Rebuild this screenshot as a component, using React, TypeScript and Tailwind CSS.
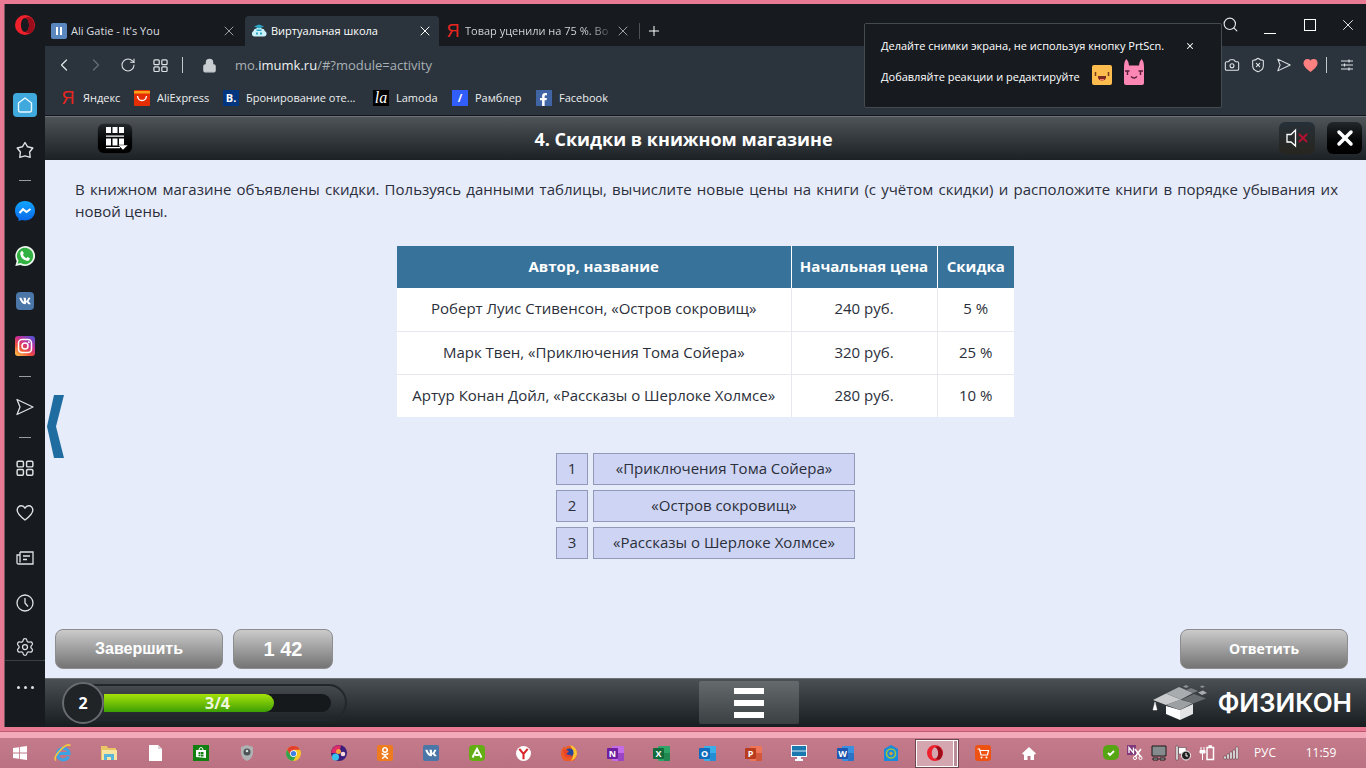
import { type FC, type ReactNode } from "react";
import {
  Camera,
  ChevronLeft,
  ChevronRight,
  Lock,
  Plus,
  RotateCw,
  Search,
  Settings,
  ShieldX,
  X,
} from "lucide-react";
import { FaFacebookF, FaOdnoklassniki, FaVk } from "react-icons/fa";

type IconProps = { className?: string };

const Dial: FC<IconProps> = ({ className }) => (
  <svg viewBox="0 0 16 16" className={className} fill="none" stroke="currentColor" strokeWidth="1.3">
    <rect x="1" y="2" width="5.6" height="5" rx="1" />
    <rect x="9.4" y="2" width="5.6" height="5" rx="1" />
    <rect x="1" y="9.4" width="5.6" height="5" rx="1" />
    <rect x="9.4" y="9.4" width="5.6" height="5" rx="1" />
  </svg>
);

const Plane: FC<IconProps> = ({ className }) => (
  <svg viewBox="0 0 18 18" className={className} fill="none" stroke="currentColor" strokeWidth="1.3" strokeLinejoin="round">
    <path d="M1 1.5 17 9 1 16.5 4 9Z" />
  </svg>
);

const Heart: FC<IconProps & { fill?: string }> = ({ className, fill = "none" }) => (
  <svg viewBox="0 0 18 18" className={className} fill={fill} stroke="currentColor" strokeWidth="1.4" strokeLinejoin="round">
    <path d="M9 16C5 13 1.2 10 1.2 6.3 1.2 3.6 3.1 1.8 5.3 1.8 7 1.8 8.3 2.7 9 4.2 9.7 2.7 11 1.8 12.7 1.8 14.9 1.8 16.8 3.6 16.8 6.3 16.8 10 13 13 9 16Z" />
  </svg>
);

const OperaLogo: FC<IconProps> = ({ className }) => (
  <svg viewBox="0 0 20 20" className={className}>
    <path fillRule="evenodd" fill="#f0202d" d="M10 0a10 10 0 1 0 0 20 10 10 0 0 0 0-20Zm0 3c2.4 0 4 3.1 4 7s-1.6 7-4 7-4-3.1-4-7 1.6-7 4-7Z" />
    <path fill="#9c0d1c" d="M10 3c3-2 5-1 6.7.6A10 10 0 0 1 16.7 17.4C15 18.8 12.5 18.6 10 17c2.4 0 4-3.1 4-7s-1.6-7-4-7Z" />
  </svg>
);

const Home = () => (
  <span className="flex size-6 items-center justify-center rounded-sm bg-[#3fa9dd]">
    <svg viewBox="0 0 16 16" className="size-4" fill="none" stroke="#e8f8ff" strokeWidth="1.4" strokeLinejoin="round">
      <path d="M8 1 14.5 6V13Q14.5 15 12.5 15H3.5Q1.5 15 1.5 13V6Z" />
    </svg>
  </span>
);

const Star = () => (
  <svg viewBox="0 0 18 18" className="size-[18px]" fill="none" stroke="currentColor" strokeWidth="1.4" strokeLinejoin="round">
    <path d="M9 1.5 11.6 5.8 16.8 7 13.6 11 14.2 16.3 9 14.8 3.8 16.3 4.4 11 1.2 7 6.4 5.8Z" />
  </svg>
);

const Messenger = () => (
  <svg viewBox="0 0 20 20" className="size-5">
    <defs>
      <linearGradient id="msg" x1="0" y1="0" x2="0" y2="1">
        <stop offset="0" stopColor="#12a5ff" />
        <stop offset="1" stopColor="#0968e8" />
      </linearGradient>
    </defs>
    <path fill="url(#msg)" d="M10 0C15.800 0 20 4 20 9.700S15.800 19.400 10 19.400Q8.300 19.400 7 19L3.500 20V17.200Q0 14.300 0 9.700C0 4 4.200 0 10 0Z" />
    <path d="M4.500 12 8 8.200 11.500 11 15.500 8" fill="none" stroke="#fff" strokeWidth="2" />
  </svg>
);

const WhatsApp = () => (
  <svg viewBox="0 0 20 20" className="size-5">
    <path fill="#eef7ee" d="M10 0a10 10 0 1 1-4.500 18.900L.3 20 1.700 15A10 10 0 0 1 10 0Z" />
    <path fill="#32b142" d="M10 1.800a8.200 8.200 0 1 1-4.300 15.200L2.600 17.700 3.500 14.800A8.200 8.200 0 0 1 10 1.800Z" />
    <path fill="#fff" d="M6.300 5.300 7.800 5.200 8.800 7.600 7.900 8.800Q9.200 11.300 11.400 12.200L12.500 11.100 14.900 12.300Q14.800 14.800 12.400 14.900 6.200 13.900 5.200 7.700 5.200 6.100 6.300 5.300Z" />
  </svg>
);

const VkTile: FC<{ rounded?: boolean }> = ({ rounded }) => (
  <span className={`flex items-center justify-center bg-[#4a76a8] text-white ${rounded ? "size-[18px] rounded" : "size-4 rounded-xs"}`}>
    <FaVk className="size-3" />
  </span>
);

const Instagram = () => (
  <svg viewBox="0 0 20 20" className="size-5">
    <defs>
      <linearGradient id="insta" x1="0.1" y1="1" x2="0.8" y2="0">
        <stop offset="0" stopColor="#fdc04c" />
        <stop offset="0.35" stopColor="#f0503a" />
        <stop offset="0.65" stopColor="#c72e92" />
        <stop offset="1" stopColor="#5c4fd0" />
      </linearGradient>
    </defs>
    <rect width="20" height="20" rx="3" fill="url(#insta)" />
    <rect x="3.500" y="3.500" width="13" height="13" rx="3.500" fill="none" stroke="#fff" strokeWidth="1.500" />
    <circle cx="10" cy="10" r="3" fill="none" stroke="#fff" strokeWidth="1.500" />
    <circle cx="13.800" cy="6.300" r="1" fill="#fff" />
  </svg>
);

const News = () => (
  <svg viewBox="0 0 18 18" className="size-[18px]" fill="none" stroke="currentColor" strokeWidth="1.3">
    <path d="M4 3h13v12H2.500Q1 15 1 13.500V6h3" />
    <path d="M4 3V13.500M7 7h7M7 10.500h4" />
  </svg>
);

const Clock = () => (
  <svg viewBox="0 0 18 18" className="size-[18px]" fill="none" stroke="currentColor" strokeWidth="1.3">
    <circle cx="9" cy="9" r="8" />
    <path d="M9 4v5l3 3.500" />
  </svg>
);

const Dash = () => (
  <div className="flex h-4 w-full items-center justify-center">
    <span className="h-px w-3 bg-[#9a9da0]" />
  </div>
);

const SideButton: FC<{ label: string; children: ReactNode }> = ({ label, children }) => (
  <button aria-label={label} className="flex h-[45px] w-full shrink-0 items-center justify-center text-[#dfe1e3]">
    {children}
  </button>
);

const Sidebar = () => (
  <nav className="flex w-10 shrink-0 flex-col items-center bg-[#171b1f]">
    <button aria-label="Opera" className="mb-9 flex h-[42px] items-center">
      <OperaLogo className="size-5" />
    </button>
    <SideButton label="Экспресс-панель"><Home /></SideButton>
    <SideButton label="Закладки"><Star /></SideButton>
    <Dash />
    <SideButton label="Messenger"><Messenger /></SideButton>
    <SideButton label="WhatsApp"><WhatsApp /></SideButton>
    <SideButton label="VK"><VkTile rounded /></SideButton>
    <SideButton label="Instagram"><Instagram /></SideButton>
    <Dash />
    <SideButton label="Flow"><Plane className="size-[18px]" /></SideButton>
    <Dash />
    <SideButton label="Вкладки"><Dial className="size-[18px]" /></SideButton>
    <SideButton label="Избранное"><Heart className="size-[18px]" /></SideButton>
    <SideButton label="Новости"><News /></SideButton>
    <SideButton label="История"><Clock /></SideButton>
    <button aria-label="Настройки" className="flex h-9 w-full items-end justify-center border-b border-[#3b4045] pb-[3px] text-[#dfe1e3]">
      <Settings className="size-5" strokeWidth={1.5} />
    </button>
    <button aria-label="Ещё" className="flex h-[52px] items-center gap-1">
      <span className="size-[3px] rounded-full bg-[#dfe1e3]" />
      <span className="size-[3px] rounded-full bg-[#dfe1e3]" />
      <span className="size-[3px] rounded-full bg-[#dfe1e3]" />
    </button>
  </nav>
);

const School = () => (
  <svg viewBox="0 0 16 16" className="size-4 shrink-0">
    <path fill="#c9f2fb" d="M3 13.500a3 3 0 0 1-.5-5.500Q3 5.500 5 5.700 8 3 11 5.700 13.500 5.500 13.700 8 16 9 15.500 11.500 15 13.500 13 13.500Z" />
    <path fill="#2aa5c5" d="M3 3.500 8 1.500l5 2L8 5.500ZM5.500 6.500h5V8h-5ZM5 9.500h2v2H5ZM9 9.500h2v2H9Z" />
  </svg>
);

const Tab: FC<{ icon: ReactNode; title: string; active?: boolean; faded?: boolean }> = ({ icon, title, active, faded }) => (
  <div className={`flex h-[30px] items-center gap-1 pl-1.5 ${active ? "w-[194px] rounded-t-sm bg-[#2b343c] pr-1.5 text-white" : "w-[200px] pr-2 text-[#dcdee0]"}`}>
    {icon}
    <span className={`min-w-0 flex-1 whitespace-nowrap ${faded ? "bg-linear-to-r from-[#dcdee0] from-85% to-[#3a3f44] bg-clip-text text-transparent" : ""}`}>
      {title}
    </span>
    <button aria-label="Закрыть вкладку" className={active ? "text-white" : "text-[#9b9fa3]"}>
      <X className="size-4" strokeWidth={1.5} />
    </button>
  </div>
);

const Ya = () => <span className="w-4 shrink-0 text-center font-['Liberation_Sans'] text-lg leading-5 text-[#e8261f]">Я</span>;

const TabBar = () => (
  <div className="flex h-[42px] items-center bg-[#171b1f]">
    <div className="flex h-full items-end">
      <Tab
        title="Ali Gatie - It's You"
        icon={
          <span className="flex size-4 items-center justify-center gap-0.5 rounded-xs bg-[#5a87bd]">
            <span className="h-2 w-0.5 bg-white" />
            <span className="h-2 w-0.5 bg-white" />
          </span>
        }
      />
      <Tab active title="Виртуальная школа" icon={<School />} />
      <Tab faded title="Товар уценили на 75 %. Во" icon={<Ya />} />
      <div className="flex h-[30px] items-center gap-1.5 text-white">
        <span className="h-4 w-px bg-[#4b5157]" />
        <button aria-label="Новая вкладка"><Plus className="size-4" strokeWidth={1.5} /></button>
      </div>
    </div>
    <div className="ml-auto flex text-[#e6e8ea]">
      <button aria-label="Поиск" className="relative z-20 flex w-10 justify-center"><Search className="size-[17px]" strokeWidth={1.6} /></button>
      <button aria-label="Свернуть" className="flex w-10 items-end justify-center"><span className="h-px w-3 bg-white" /></button>
      <button aria-label="Развернуть" className="flex w-10 items-center justify-center"><span className="size-3 border border-white" /></button>
      <button aria-label="Закрыть" className="flex w-9 justify-center"><X className="size-[18px]" strokeWidth={1.3} /></button>
    </div>
  </div>
);

const AddressBar = () => (
  <div className="flex h-[38px] items-center pr-1.5 pl-[3px] text-[#dfe3e6]">
    <button aria-label="Назад" className="flex w-8 justify-center"><ChevronLeft className="size-5" strokeWidth={1.5} /></button>
    <button aria-label="Вперёд" className="flex w-8 justify-center text-[#646d75]"><ChevronRight className="size-5" strokeWidth={1.5} /></button>
    <button aria-label="Обновить" className="flex w-8 justify-center"><RotateCw className="size-4" strokeWidth={1.6} /></button>
    <button aria-label="Экспресс-панель" className="flex w-8 justify-center"><Dial className="size-[15px]" /></button>
    <span className="ml-1.5 mr-2.5 h-4 w-px bg-[#c3c8cc]" />
    <span className="flex w-8 justify-center"><Lock className="size-[15px] text-[#c9ced2]" fill="#c9ced2" /></span>
    <button className="ml-2.5 flex-1 text-left text-[13px] text-[#a9b0b6]">
      mo.<span className="text-[#eef0f2]">imumk.ru</span>/#?module=activity
    </button>
    <button aria-label="Снимок" className="flex w-[26px] justify-center"><Camera className="size-4" strokeWidth={1.6} /></button>
    <button aria-label="Защита" className="flex w-[26px] justify-center"><ShieldX className="size-4" strokeWidth={1.6} /></button>
    <button aria-label="Отправить" className="flex w-[26px] justify-center"><Plane className="size-[14px]" /></button>
    <button aria-label="В избранное" className="flex w-[26px] justify-center text-[#ff8080]"><Heart className="size-[15px]" fill="#ff8080" /></button>
    <span className="mx-[3px] h-4 w-px bg-[#c3c8cc]" />
    <button aria-label="Простые настройки" className="ml-1 flex w-[26px] justify-center">
      <svg viewBox="0 0 14 14" className="size-[14px]" stroke="currentColor" strokeWidth="1.2">
        <path d="M1 3h12M1 7h12M1 11h12M9 1.500v3M4.500 5.500v3M9 9.500v3" />
      </svg>
    </button>
  </div>
);

const bookmarks: { title: string; width: string; icon: ReactNode }[] = [
  { title: "Яндекс", width: "w-[74px]", icon: <Ya /> },
  {
    title: "AliExpress",
    width: "w-[89px]",
    icon: (
      <svg viewBox="0 0 16 16" className="size-4 shrink-0">
        <rect width="16" height="16" rx="1" fill="#e62e04" />
        <path d="M0 1h16v2.500H0Z" fill="#f9a11b" />
        <path d="M3.500 6Q4 10.500 8 10.500T12.500 6" fill="none" stroke="#fff" strokeWidth="1.4" />
      </svg>
    ),
  },
  {
    title: "Бронирование оте...",
    width: "w-[150px]",
    icon: <span className="flex size-4 shrink-0 items-center justify-center bg-[#003580] font-bold text-white">B.</span>,
  },
  {
    title: "Lamoda",
    width: "w-[79px]",
    icon: <span className="flex size-4 shrink-0 items-center justify-center bg-black font-['Liberation_Serif'] text-base leading-4 text-white italic">la</span>,
  },
  {
    title: "Рамблер",
    width: "w-[84px]",
    icon: <span className="flex size-4 shrink-0 items-center justify-center bg-[#315efb] font-bold text-white">/</span>,
  },
  {
    title: "Facebook",
    width: "w-[90px]",
    icon: (
      <span className="flex size-4 shrink-0 items-end justify-end bg-[#4065a5] pr-0.5 text-white">
        <FaFacebookF className="size-[13px]" />
      </span>
    ),
  },
];

const Bookmarks = () => (
  <div className="flex h-[31px] items-center pb-1 pl-[15px] text-[#eceef0]">
    {bookmarks.map((b) => (
      <a key={b.title} href="#" className={`flex items-center gap-[7px] whitespace-nowrap ${b.width}`}>
        {b.icon}
        {b.title}
      </a>
    ))}
  </div>
);

const SnapshotTip = () => (
  <div className="absolute top-[19px] right-36 z-10 h-[85px] w-[358px] rounded-xs border border-[#434a50] bg-[#171b1f] px-4 pt-3 text-white">
    <div className="flex h-5 items-center justify-between pr-2.5">
      <span className="whitespace-nowrap">Делайте снимки экрана, не используя кнопку PrtScn.</span>
      <button aria-label="Закрыть подсказку"><X className="size-[10px]" strokeWidth={2.5} /></button>
    </div>
    <div className="mt-[3px] flex items-end gap-3">
      <span className="whitespace-nowrap">Добавляйте реакции и редактируйте</span>
      <svg viewBox="0 0 20 20" className="size-5">
        <rect width="20" height="20" rx="2" fill="#fcbc4e" />
        <path d="M3.500 7v4M16.500 7v4" stroke="#7a3c18" strokeWidth="1.500" />
        <path d="M6 11h8v1.500Q13.500 15.500 10 15.500T6 12.500Z" fill="#7a2c20" />
        <path d="M8 14h4v1.300H8Z" fill="#ff7b6b" />
      </svg>
      <svg viewBox="0 0 20 26" className="h-[26px] w-5">
        <path d="M0 8Q0 2 2.500 0 4.500 2 5 6.500h10Q15.500 2 17.500 0 20 2 20 8V24a2 2 0 0 1-2 2H2a2 2 0 0 1-2-2Z" fill="#fd87b4" />
        <path d="M1 12h4.500M3.500 12v4M19 12h-4.500M16.500 12v4M7 17.500Q10 20.500 13 17.500" fill="none" stroke="#5b1f3c" strokeWidth="1.400" />
      </svg>
    </div>
  </div>
);

const LessonHeader = () => (
  <header className="grid h-[45px] shrink-0 grid-cols-3 items-center border-t border-[#12161a] bg-linear-to-b from-[#50555a] to-[#1c2125] shadow-[inset_0_1px_0_#6d7378]">
    <button aria-label="Содержание" className="ml-[53px] flex h-[29px] w-[34px] items-center justify-center rounded-md bg-linear-to-b from-[#24282b] to-black shadow-[0_0_1px_#000]">
      <svg viewBox="0 0 26 24" className="h-6 w-[26px]" fill="#fff">
        <path d="M4 1h5v6H4ZM10.500 1h5v6h-5ZM17 1h5v6h-5ZM4 9.500h18v1.300H4ZM4 12.500h5v7H4ZM10.500 12.500h5v7h-5ZM17 12.500h5v7h-5ZM4 21h14v1.300H4Z" />
        <path d="M16 19h10l-5 5Z" stroke="#111" strokeWidth="0.500" />
      </svg>
    </button>
    <h1 className="pt-0.5 pr-11 text-center text-lg leading-6 font-bold whitespace-nowrap text-white">4. Скидки в книжном магазине</h1>
    <div className="flex justify-end gap-3 pr-1">
      <button aria-label="Звук" className="flex h-8 w-9 items-center justify-center rounded-md bg-linear-to-b from-[#263038] to-[#27251f]">
        <svg viewBox="0 0 24 20" className="h-5 w-6" fill="none">
          <path d="M2 6.500h4L10.500 2v16L6 14H2Z" stroke="#fff" strokeWidth="1.300" />
          <path d="M14 6l8 8M22 6l-8 8" stroke="#b0122f" strokeWidth="2" />
        </svg>
      </button>
      <button aria-label="Выход" className="flex h-8 w-[35px] items-center justify-center rounded-md bg-linear-to-b from-[#24282b] to-black text-white">
        <X className="size-6" strokeWidth={3.5} />
      </button>
    </div>
  </header>
);

const books = [
  { name: "Роберт Луис Стивенсон, «Остров сокровищ»", price: "240 руб.", discount: "5 %" },
  { name: "Марк Твен, «Приключения Тома Сойера»", price: "320 руб.", discount: "25 %" },
  { name: "Артур Конан Дойл, «Рассказы о Шерлоке Холмсе»", price: "280 руб.", discount: "10 %" },
];

const answers = ["«Приключения Тома Сойера»", "«Остров сокровищ»", "«Рассказы о Шерлоке Холмсе»"];

const actionClass = "h-10 rounded-lg border border-[#8d8d90] bg-linear-to-b from-[#cbcbcb] to-[#747474] font-bold text-white";

const Lesson = () => (
  <main className="relative flex flex-1 flex-col bg-[#e7ecfa] text-[15px] text-[#2b2f3a]">
    <button aria-label="Предыдущее задание" className="absolute top-1/2 left-0.5 -translate-y-6">
      <svg viewBox="0 0 17 63" className="h-[63px] w-[17px]">
        <path d="M7 0h10L9 31.500 17 63H7L0 31.500Z" fill="#1f6ca0" />
      </svg>
    </button>
    <p className="pt-[18px] pr-7 pl-[30px] text-justify leading-[22px]">
      В книжном магазине объявлены скидки. Пользуясь данными таблицы, вычислите новые цены на книги (с учётом скидки) и расположите книги в порядке убывания их новой цены.
    </p>
    <table className="mx-auto mt-6 w-[617px] table-fixed text-center leading-5">
      <thead>
        <tr className="h-[42px] bg-[#37729a] text-white">
          <th className="w-[394px] pb-0.5">Автор, название</th>
          <th className="w-[146px] border-l border-white pb-0.5">Начальная цена</th>
          <th className="border-l border-white pb-0.5">Скидка</th>
        </tr>
      </thead>
      <tbody className="bg-white">
        {books.map((book) => (
          <tr key={book.name} className="h-[43px] border-b border-[#e6e8ee] last:border-b-0">
            <td className="pb-0.5 whitespace-nowrap">{book.name}</td>
            <td className="border-l border-[#e6e8ee] pb-0.5">{book.price}</td>
            <td className="border-l border-[#e6e8ee] pb-0.5">{book.discount}</td>
          </tr>
        ))}
      </tbody>
    </table>
    <ol className="mx-auto mt-9 flex flex-col gap-[5px] text-center leading-5">
      {answers.map((answer, i) => (
        <li key={answer} className="flex h-8 gap-[5px]">
          <span className="flex w-8 items-center justify-center border border-[#9299b8] bg-[#ced4f3] pb-0.5">{i + 1}</span>
          <button className="w-[262px] border border-[#9299b8] bg-[#ced4f3] pb-0.5 whitespace-nowrap">{answer}</button>
        </li>
      ))}
    </ol>
    <div className="mt-auto flex gap-2.5 px-2.5 pt-4 pb-[9px]">
      <button className={`w-[168px] font-['Liberation_Sans'] text-base ${actionClass}`}>Завершить</button>
      <button className={`w-[100px] font-['Liberation_Sans'] text-xl ${actionClass}`}>1 42</button>
      <button className={`mr-2 ml-auto w-[168px] text-sm ${actionClass}`}>Ответить</button>
    </div>
  </main>
);

const LessonFooter = () => (
  <footer className="flex h-[49px] shrink-0 items-center justify-between bg-linear-to-b from-[#4b5155] to-[#181d20] pr-3.5 pl-[17px] shadow-[inset_0_1px_0_#6b7175]">
    <div className="flex h-[37px] w-[285px] items-center rounded-full border-2 border-[#22272b] bg-linear-to-b from-[#454a4e] to-[#202528] pr-3.5">
      <span className="-ml-0.5 flex size-[42px] shrink-0 items-center justify-center rounded-full border-2 border-[#686c70] bg-[#202427] text-base font-bold text-white">2</span>
      <div className="relative h-[18px] flex-1 overflow-hidden rounded-r-full bg-[#16191c]">
        <div className="h-full rounded-r-full bg-linear-to-b from-[#a4e30a] to-[#3a9f04]" style={{ width: `${(3 / 4) * 100}%` }} />
        <span className="absolute inset-0 text-center text-base leading-[18px] font-bold text-[#eef7dc]">3/4</span>
      </div>
    </div>
    <button aria-label="Меню" className="flex h-[43px] w-[100px] flex-col items-center justify-center gap-[6px] rounded-xs bg-linear-to-b from-[#656a6d] to-[#3b4043]">
      <span className="h-[6px] w-[30px] bg-white" />
      <span className="h-[6px] w-[30px] bg-white" />
      <span className="h-[6px] w-[30px] bg-white" />
    </button>
    <div className="flex items-center gap-2.5">
      <svg viewBox="0 0 56 36" className="h-9 w-14">
        <path d="M14 21l14 4v10l-14-6Z" fill="#fff" />
        <path d="M28 25l13-6v10L28 35Z" fill="#e1e3e4" />
        <path d="M1 15 14 8.500 29 14.500 14 20Z" fill="#c9cbcc" />
        <path d="M14 8.500 27 2 41 8 29 14.500Z" fill="#a9acae" />
        <path d="M14 20 28 14.500 41 18 28 25Z" fill="#9da0a2" />
        <path d="M30 14.500 42 9 54 13.500 41 18.500Z" fill="#686d70" />
        <path d="M34 5 39 3 46 6 41 8Z" fill="#777c7f" />
        <path d="M46 7.500 51 5.500 55 8 50 10Z" fill="#a9acae" />
        <path d="M31 1.500 34 0 37 1.500 34 3ZM48 1.500 50 .5 53 1.500 50 3Z" fill="#8d9193" />
        <path d="M3 17 1 25h4Z" fill="#fff" stroke="#fff" strokeWidth="0.5" />
      </svg>
      <span className="font-['Inter',sans-serif] text-[26px] leading-9 font-semibold text-white">ФИЗИКОН</span>
    </div>
  </footer>
);

const Office: FC<{ letter: string; dark: string; light: string }> = ({ letter, dark, light }) => (
  <svg viewBox="0 0 17 17" className="size-[17px]">
    <rect x="5" y="1" width="12" height="15" rx="1" fill={light} />
    <path d="M11 8h6v7q0 1-1 1h-5Z" fill={dark} opacity="0.5" />
    <rect x="0" y="3" width="11" height="11" rx="1" fill={dark} />
    <text x="5.500" y="11.500" textAnchor="middle" fill="#fff" className="font-['Open_Sans'] text-[9px] font-bold">{letter}</text>
  </svg>
);

const apps: { label: string; icon: ReactNode }[] = [
  {
    label: "Internet Explorer",
    icon: (
      <svg viewBox="0 0 18 18" className="size-[18px]" fill="none">
        <path d="M14.500 12.500A5.800 5.800 0 1 1 15 9.500H5" stroke="#3da2e4" strokeWidth="3" />
        <path d="M2 16.500Q-1 14 6 6.500T16.500 1.500" stroke="#f5c63d" strokeWidth="1.600" />
      </svg>
    ),
  },
  {
    label: "Проводник",
    icon: (
      <svg viewBox="0 0 18 16" className="h-4 w-[18px]">
        <path d="M1 1h6l1 2h8v12H1Z" fill="#e9c565" />
        <path d="M2 5h15v10H2Z" fill="#f8e5a1" />
        <path d="M4 15V9h10v6h-3v-3H7v3Z" fill="#5bb6dc" />
      </svg>
    ),
  },
  {
    label: "Документ",
    icon: (
      <svg viewBox="0 0 13 16" className="h-4 w-[13px]">
        <path d="M0 0h9l4 4v12H0Z" fill="#fff" />
        <path d="M9 0v4h4" fill="#d7d7d7" />
      </svg>
    ),
  },
  {
    label: "Магазин",
    icon: (
      <svg viewBox="0 0 16 16" className="size-4">
        <rect width="16" height="16" fill="#118011" />
        <path d="M3 5h10v8L3 12Z" fill="#fff" />
        <path d="M6 5Q6 2.500 8 2.500T10 5" fill="none" stroke="#fff" />
        <path d="M5.500 7h2v2h-2ZM8 7h2.500v2H8ZM5.500 9.500h2v1.700h-2ZM8 9.500h2.500v2H8Z" fill="#118011" />
      </svg>
    ),
  },
  {
    label: "Безопасность",
    icon: (
      <svg viewBox="0 0 14 16" className="h-4 w-3.5">
        <path d="M1 2 7 0l6 2v6q0 5-6 8Q1 13 1 8Z" fill="#aeb2b3" />
        <circle cx="7" cy="7" r="3.500" fill="#4c5355" />
        <circle cx="7" cy="6" r="1.300" fill="#d8dcdc" />
      </svg>
    ),
  },
  {
    label: "Chrome",
    icon: (
      <svg viewBox="0 0 16 16" className="size-[15px]">
        <circle cx="8" cy="8" r="8" fill="#f8c727" />
        <path d="M1.100 4A8 8 0 0 1 15 4H8L5 10Z" fill="#e1402f" />
        <path d="M1.100 4A8 8 0 0 0 7.500 16L11 10H5Z" fill="#31a350" />
        <circle cx="8" cy="8" r="3.600" fill="#fff" />
        <circle cx="8" cy="8" r="2.800" fill="#3e80e6" />
      </svg>
    ),
  },
  {
    label: "Браузер",
    icon: (
      <svg viewBox="0 0 16 16" className="size-4">
        <circle cx="8" cy="8" r="8" fill="#3b1e7b" />
        <path d="M0 8A8 8 0 0 1 10 .5L8 8Z" fill="#e12b69" />
        <circle cx="4.500" cy="12" r="3.500" fill="#39c2ed" />
        <circle cx="7.500" cy="6.500" r="2.500" fill="#f6a13a" />
        <circle cx="12" cy="9" r="2.300" fill="#f9d8dd" />
      </svg>
    ),
  },
  {
    label: "Одноклассники",
    icon: <span className="flex size-4 items-center justify-center rounded-xs bg-[#ee7b20] text-white"><FaOdnoklassniki className="size-3" /></span>,
  },
  { label: "ВКонтакте", icon: <VkTile /> },
  {
    label: "Амиго",
    icon: (
      <svg viewBox="0 0 16 16" className="size-4">
        <rect width="16" height="16" rx="4" fill="#63ae13" />
        <path d="M3.500 12.500 8 4l4.500 8.500M6 10h4" fill="none" stroke="#fff" strokeWidth="2" />
      </svg>
    ),
  },
  {
    label: "Яндекс.Браузер",
    icon: (
      <svg viewBox="0 0 16 16" className="size-[15px]">
        <circle cx="8" cy="8" r="8" fill="#fff" />
        <path d="M3.500 3 8 8.500 12.500 3M8 8v6" fill="none" stroke="#d9262b" strokeWidth="2.200" />
      </svg>
    ),
  },
  {
    label: "Firefox",
    icon: (
      <svg viewBox="0 0 16 16" className="size-4">
        <path d="M1 4 3 1.500 4 3Q7-.5 12 1.500 16 4 16 9A8 8 0 0 1 0 9Q0 6 1 4Z" fill="#ee5a24" />
        <path d="M9 0Q16 2 16 9 15 14 10 16 15 9 9 0Z" fill="#f9c332" />
        <circle cx="8.500" cy="7.500" r="4" fill="#24469a" />
        <path d="M2 5Q6 4 8 6.500L5.500 8.500Q7 11 11 9.500 8 14 4 11.500Z" fill="#e8432c" />
      </svg>
    ),
  },
  { label: "OneNote", icon: <Office letter="N" dark="#6d1f9f" light="#c46be8" /> },
  { label: "Excel", icon: <Office letter="X" dark="#136b3b" light="#2fa467" /> },
  { label: "Outlook", icon: <Office letter="O" dark="#0f6cbd" light="#3aaee9" /> },
  { label: "PowerPoint", icon: <Office letter="P" dark="#b83c1d" light="#ee7558" /> },
  {
    label: "Компьютер",
    icon: (
      <svg viewBox="0 0 16 16" className="size-4">
        <path d="M0 0h16v12H0ZM6 12h4v2h2v2H4v-2h2Z" fill="#f2f8fb" />
        <path d="M1 1h14v10H1Z" fill="#1a78af" />
        <path d="M1 6h14" stroke="#d7edf7" />
      </svg>
    ),
  },
  { label: "Word", icon: <Office letter="W" dark="#1e55ae" light="#3a8fe0" /> },
  {
    label: "Mail.ru",
    icon: (
      <svg viewBox="0 0 14 16" className="h-4 w-3.5">
        <path d="M0 4 7 0l7 4v12H0Z" fill="#188bdd" />
        <circle cx="7" cy="8.500" r="4.500" fill="none" stroke="#9cc43e" strokeWidth="1.600" />
        <circle cx="7" cy="8.500" r="1.700" fill="#d6a33a" />
      </svg>
    ),
  },
];

const Taskbar = () => (
  <div className="flex h-[30px] shrink-0 items-center bg-linear-to-b from-[#c47a8a] to-[#ba7282] pr-[11px] text-xs text-white">
    <button aria-label="Пуск" className="flex w-10 justify-center">
      <svg viewBox="0 0 14 14" className="size-3.5" fill="#fff">
        <path d="M0 2 6 1.200V6.600H0ZM6.800 1 14 0v6.600H6.800ZM0 7.400h6v5.400L0 12ZM6.800 7.400H14V14l-7.200-1Z" />
      </svg>
    </button>
    {apps.map((app) => (
      <button key={app.label} aria-label={app.label} className="flex w-[46px] justify-center">
        {app.icon}
      </button>
    ))}
    <button aria-label="Opera" className="mx-px flex h-[29px] w-11 border border-[#6e4650] bg-[#b98d97]">
      <span className="flex h-full w-[38px] items-center justify-center border border-white bg-[#d3a6b0]"><OperaLogo className="size-4" /></span>
      <span className="h-full flex-1 border-y border-r border-white" />
    </button>
    <button aria-label="Покупки" className="flex w-[46px] justify-center">
      <svg viewBox="0 0 16 16" className="size-4">
        <rect width="16" height="16" rx="3" fill="#ee5213" />
        <path d="M2.500 4H4.500L6 10h6.500L13.500 5.500H5" fill="none" stroke="#fff" strokeWidth="1.200" />
        <circle cx="6.500" cy="12.500" r="1" fill="#fff" />
        <circle cx="11.500" cy="12.500" r="1" fill="#fff" />
      </svg>
    </button>
    <button aria-label="Домой" className="flex w-[46px] justify-center">
      <svg viewBox="0 0 14 13" className="h-[13px] w-3.5" fill="#fff">
        <path d="M7 0 14 6.500 13 7.500H12V13H8.500V9h-3v4H2V7.500H1L0 6.500Z" />
      </svg>
    </button>
    <div className="ml-auto flex items-center">
      <span className="flex w-6 justify-center">
        <svg viewBox="0 0 16 16" className="size-4">
          <rect x="0" y="0" width="16" height="15" rx="5" fill="#56a614" />
          <path d="M5 8l2 2 4-4" fill="none" stroke="#fff" strokeWidth="1.800" />
        </svg>
      </span>
      <span className="flex w-6 justify-center">
        <svg viewBox="0 0 16 16" className="size-4">
          <rect width="9" height="10" fill="#80397b" />
          <path d="M2 8V2.500L6.500 8V2.500" fill="none" stroke="#fff" strokeWidth="1.300" />
          <path d="M8 4l6 8M14 4l-6 8" stroke="#fff" strokeWidth="1.500" />
          <circle cx="8" cy="13" r="1.600" fill="none" stroke="#fff" />
          <circle cx="13.500" cy="13" r="1.600" fill="none" stroke="#fff" />
        </svg>
      </span>
      <span className="flex w-6 justify-center">
        <svg viewBox="0 0 16 16" className="size-4">
          <path d="M1 1h14v10H1Z" fill="#858b8c" stroke="#1a1a1a" />
          <path d="M2 13h5v2H2ZM9 13h5v2H9Z" fill="#b9b9b9" stroke="#1a1a1a" />
        </svg>
      </span>
      <span className="flex w-6 justify-center">
        <svg viewBox="0 0 16 16" className="size-4">
          <path d="M1 1h2v14H1ZM3.500 2.500H11V9H3.500Z" fill="#fff" stroke="#333" strokeWidth="0.500" />
          <circle cx="11" cy="10.500" r="4.500" fill="#222" stroke="#fff" />
          <path d="M11 8v3h2" fill="none" stroke="#fff" />
        </svg>
      </span>
      <span className="flex w-6 justify-center">
        <svg viewBox="0 0 16 16" className="size-4" fill="none" stroke="#fff">
          <path d="M8 2.500h6.500v12H8ZM9.500 1h3.500" strokeWidth="1.500" />
          <path d="M1 5.500h5v2.500H1Z" fill="#fff" />
          <path d="M2 2v3M5 2v3M3.500 8v7" />
        </svg>
      </span>
      <span className="flex w-6 justify-center">
        <svg viewBox="0 0 16 14" className="h-3.5 w-4" fill="#fff" stroke="#4a3a3e" strokeWidth="0.500">
          <path d="M1 10h2v3H1ZM4 8h2v5H4ZM7 6h2v7H7ZM10 4h2v9h-2ZM13 1h2v12h-2Z" />
        </svg>
      </span>
      <span className="w-11 text-center">РУС</span>
      <span className="w-[68px] text-center">11:59</span>
    </div>
  </div>
);

export default function App() {
  return (
    <div className="flex min-h-screen flex-col font-['Open_Sans','Noto_Sans',sans-serif] text-[11px] leading-4">
      <div className="flex flex-1 border-t-4 border-b-4 border-l-4 border-[#e87b93]">
        <div className="w-px bg-[#7d5560]" />
        <Sidebar />
        <div className="relative flex min-w-0 flex-1 flex-col">
          <div className="bg-[#2b343c]">
            <TabBar />
            <AddressBar />
            <Bookmarks />
          </div>
          <SnapshotTip />
          <LessonHeader />
          <Lesson />
          <LessonFooter />
        </div>
      </div>
      <div className="h-[7px] shrink-0 border-t border-[#c05a70] bg-[#f2a9ba]" />
      <Taskbar />
    </div>
  );
}
